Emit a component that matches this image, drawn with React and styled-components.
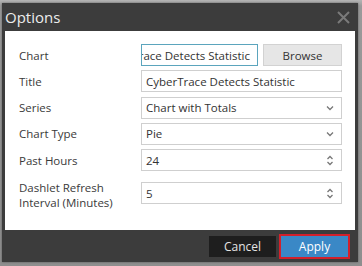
import React from 'react';
import styled, { createGlobalStyle } from 'styled-components';

const GlobalStyle = createGlobalStyle`
  html, body {
    margin: 0;
    padding: 0;
    background: #9c9c9c;
    font-family: "Open Sans", "Noto Sans", sans-serif;
  }
`;

const Page = styled.div`
  width: 362px;
  height: 266px;
  padding: 3px 4px 4px 2px;
  box-sizing: border-box;
  background: linear-gradient(#b4b4b4, #9a9a9a 6px, #8e8e8e);
`;

const Dialog = styled.div`
  width: 356px;
  height: 259px;
  background: #3c3c3c;
  display: flex;
  flex-direction: column;
  padding: 0 3px;
  box-sizing: border-box;
  box-shadow: 0 0 2px rgba(0, 0, 0, 0.4);
`;

const TitleBar = styled.div`
  height: 28px;
  display: flex;
  align-items: center;
  justify-content: space-between;
  padding: 0 5px 0 0;
`;

const Title = styled.span`
  color: #ececec;
  font-size: 15px;
  margin-top: -1px;
`;

const Body = styled.div`
  background: #fff;
  height: 199px;
  box-sizing: border-box;
  padding: 13px 13px 0 14px;
  display: flex;
  flex-direction: column;
  gap: 4.3px;
`;

const Row = styled.div`
  display: flex;
  align-items: ${(p) => (p.$top ? 'flex-start' : 'center')};
  margin-top: ${(p) => (p.$top ? '5px' : '0')};
  gap: 5px;
`;

const Label = styled.div`
  width: 117px;
  flex: none;
  font-size: 11.5px;
  line-height: 15px;
  color: #3a3a3a;
`;

const Field = styled.div`
  flex: 1;
  height: 22px;
  box-sizing: border-box;
  margin-top: ${(p) => (p.$shift ? '2px' : '0')};
  border: 1px solid ${(p) => (p.$focus ? '#5ba5bd' : '#cfcfcf')};
  display: flex;
  align-items: center;
  justify-content: ${(p) => (p.$end ? 'flex-end' : 'space-between')};
  padding: 0 7px 0 4px;
  font-size: 11.5px;
  color: #333;
  white-space: nowrap;
  overflow: hidden;
`;

const Browse = styled.div`
  width: 79px;
  height: 22px;
  box-sizing: border-box;
  flex: none;
  background: #e6e6e6;
  border: 1px solid #d2d2d2;
  display: flex;
  align-items: center;
  justify-content: center;
  font-size: 11.5px;
  color: #333;
`;

const Footer = styled.div`
  flex: 1;
  display: flex;
  justify-content: flex-end;
  align-items: center;
  gap: 5px;
  padding: 0 7px 0 0;
`;

const Button = styled.div`
  width: 67px;
  height: 21px;
  display: flex;
  align-items: center;
  justify-content: center;
  font-size: 12px;
  background: ${(p) => (p.$primary ? '#3a88c6' : '#1e1e1e')};
  color: ${(p) => (p.$primary ? '#fff' : '#e4e4e4')};
  outline: ${(p) => (p.$primary ? '2px solid #d3202b' : 'none')};
  outline-offset: 0;
`;

const Chevron = () => (
  <svg width="8" height="6" viewBox="0 0 8 6">
    <path d="M1 1.5 L4 4.5 L7 1.5" fill="none" stroke="#777" strokeWidth="1.3" />
  </svg>
);

const Spin = () => (
  <svg width="8" height="11" viewBox="0 0 8 11">
    <path d="M1.5 4 L4 1.5 L6.5 4 M1.5 7 L4 9.5 L6.5 7" fill="none" stroke="#777" strokeWidth="1.3" />
  </svg>
);

const Close = () => (
  <svg width="13" height="13" viewBox="0 0 13 13">
    <path d="M1 1 L12 12 M12 1 L1 12" stroke="#7a7a7a" strokeWidth="2" />
  </svg>
);

export default function App() {
  return (
    <>
      <GlobalStyle />
      <Page>
        <Dialog>
          <TitleBar>
            <Title>Options</Title>
            <Close />
          </TitleBar>
          <Body>
            <Row>
              <Label>Chart</Label>
              <Field $focus $end>CyberTrace Detects Statistic</Field>
              <Browse>Browse</Browse>
            </Row>
            <Row>
              <Label>Title</Label>
              <Field>CyberTrace Detects Statistic</Field>
            </Row>
            <Row>
              <Label>Series</Label>
              <Field>Chart with Totals<Chevron /></Field>
            </Row>
            <Row>
              <Label>Chart Type</Label>
              <Field>Pie<Chevron /></Field>
            </Row>
            <Row>
              <Label>Past Hours</Label>
              <Field>24<Spin /></Field>
            </Row>
            <Row $top>
              <Label>Dashlet Refresh Interval (Minutes)</Label>
              <Field $shift>5<Spin /></Field>
            </Row>
          </Body>
          <Footer>
            <Button>Cancel</Button>
            <Button $primary>Apply</Button>
          </Footer>
        </Dialog>
      </Page>
    </>
  );
}
